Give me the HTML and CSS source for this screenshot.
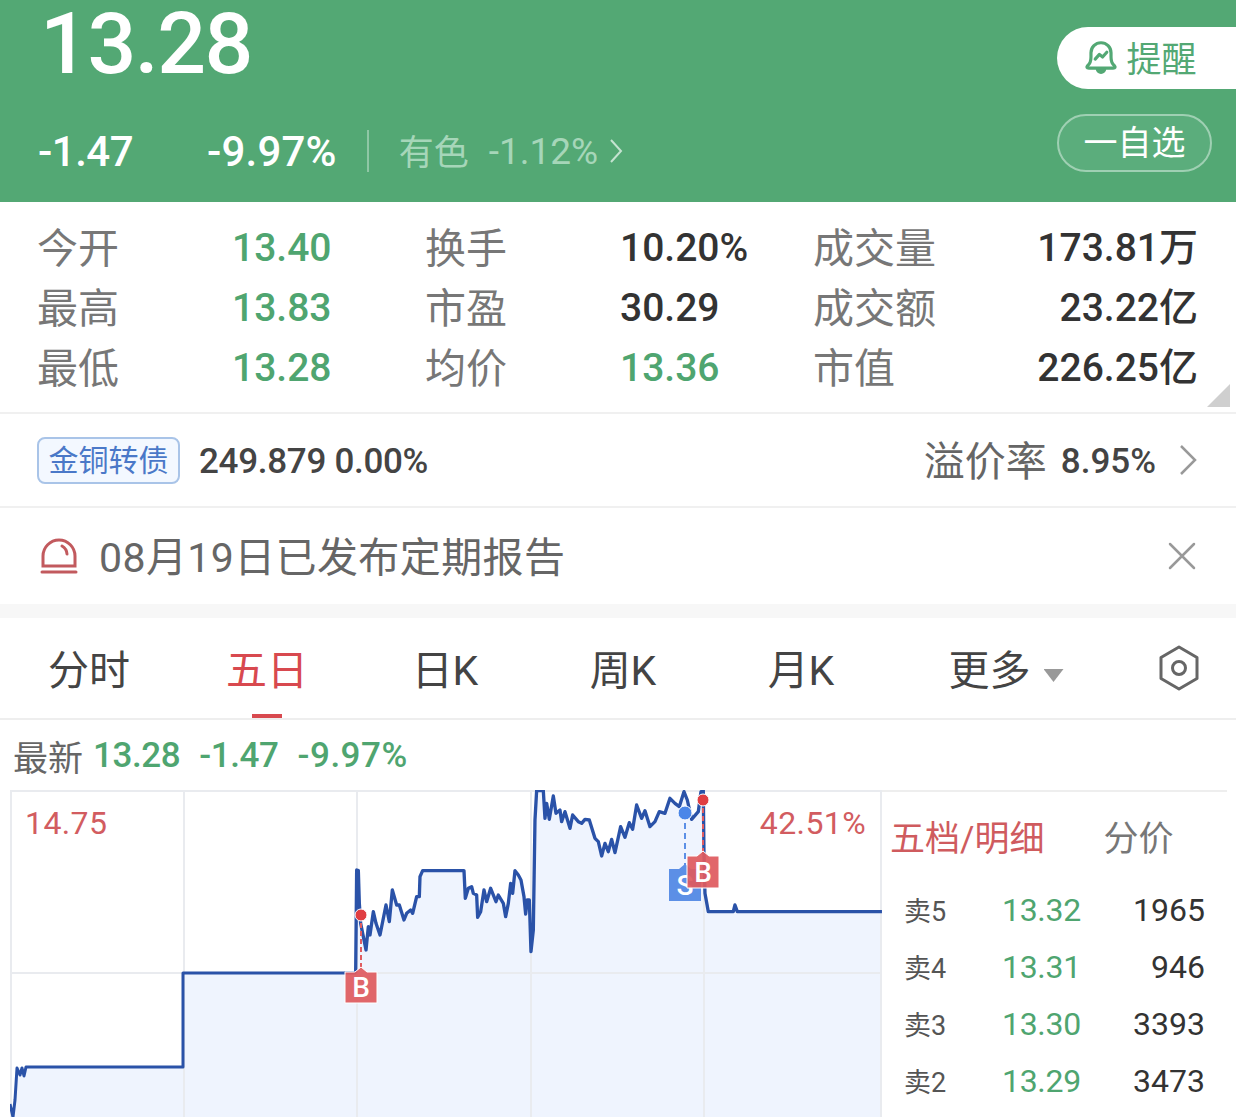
FILE: index.html
```html
<!DOCTYPE html>
<html lang="zh-CN">
<head>
    <meta charset="UTF-8">
    <meta name="viewport" content="width=device-width, initial-scale=1.0">
    <title>金诚信</title>
    <link rel="stylesheet" href="styles.css">
</head>
<body>
    <header class="quote-head">
        <div class="quote-left">
            <div class="last-price">13.28</div>
            <div class="change-row">
                <span class="change-abs">-1.47</span>
                <span class="change-pct">-9.97%</span>
                <span class="change-sep"></span>
                <span class="sector-name">有色</span>
                <span class="sector-pct">-1.12%</span>
                <svg class="sector-arrow" viewBox="0 0 14 26"><path d="M2 2l10 11L2 24"/></svg>
            </div>
        </div>
        <div class="quote-actions">
            <button class="btn-remind">
                <svg class="bell-icon" viewBox="0 0 32 36">
                    <path d="M3.500 26c2.500-2 3-4 3-8v-4a9.500 9.500 0 0 1 19 0v4c0 4 .5 6 3 8 1.500 1.500 1 2.500-1 2.500H4.500c-2 0-2.500-1-1-2.500z"/>
                    <path class="bell-clapper" d="M11 29h10a5 5 0 0 1-10 0z"/>
                    <path d="M10.500 20l4-4.500 3 2.500 4-4.500"/>
                </svg>
                <span>提醒</span>
            </button>
            <button class="btn-watch">一自选</button>
        </div>
    </header>

    <section class="stats">
        <div class="stat-label">今开</div><div class="stat-val green">13.40</div>
        <div class="stat-label">换手</div><div class="stat-val">10.20%</div>
        <div class="stat-label">成交量</div><div class="stat-val right">173.81万</div>
        <div class="stat-label">最高</div><div class="stat-val green">13.83</div>
        <div class="stat-label">市盈</div><div class="stat-val">30.29</div>
        <div class="stat-label">成交额</div><div class="stat-val right">23.22亿</div>
        <div class="stat-label">最低</div><div class="stat-val green">13.28</div>
        <div class="stat-label">均价</div><div class="stat-val green">13.36</div>
        <div class="stat-label">市值</div><div class="stat-val right">226.25亿</div>
        <span class="stats-corner"></span>
    </section>

    <section class="bond-row">
        <span class="bond-tag">金铜转债</span>
        <span class="bond-nums">249.879 0.00%</span>
        <span class="bond-premium">溢价率</span>
        <span class="bond-rate">8.95%</span>
        <svg class="bond-arrow" viewBox="0 0 18 32"><path d="M2 2l14 14L2 30"/></svg>
    </section>

    <section class="notice-row">
        <svg class="notice-icon" viewBox="0 0 38 38">
            <path d="M3 29V19a16 16 0 0 1 32 0v10z"/>
            <path d="M22 9a10 10 0 0 1 5 8"/>
            <path d="M2 35h34"/>
        </svg>
        <span class="notice-text">08月19日已发布定期报告</span>
        <svg class="notice-close" viewBox="0 0 28 28"><path d="M2 2l24 24M26 2L2 26"/></svg>
    </section>

    <div class="band"></div>

    <nav class="tabs">
        <span class="tab">分时</span>
        <span class="tab active">五日</span>
        <span class="tab">日K</span>
        <span class="tab">周K</span>
        <span class="tab">月K</span>
        <span class="tab tab-more">更多<i class="more-caret"></i></span>
        <svg class="hex-icon" viewBox="0 0 44 48">
            <path d="M22 3l18 10.500v21L22 45 4 34.500v-21z"/>
            <circle cx="22" cy="24" r="6.500"/>
        </svg>
    </nav>

    <div class="latest-row">
        <span class="latest-label">最新</span>
        <span>13.28</span>
        <span>-1.47</span>
        <span>-9.97%</span>
    </div>

    <section class="chart-wrap">
        <svg class="chart" viewBox="10 790 872 327">
            <!-- fill under the line -->
            <path class="area" d="M14 1117L17 1067H183V973H356V1117z"/>
            <g transform="translate(340 780) scale(.3333)">
                <polygon class="area" points="47,1011 47,580 50,270 55,272 58,370 62,430 70,470 78,510 85,440 90,465 100,395 108,430 120,465 138,375 148,425 157,330 170,375 178,375 192,420 200,400 212,390 218,400 230,350 238,350 240,290 248,272 372,272 376,355 385,325 395,320 400,340 410,345 413,412 422,395 432,330 440,365 452,325 468,365 475,345 490,370 497,410 505,370 512,310 518,340 525,272 535,285 543,300 552,350 557,402 562,360 568,360 573,515 580,450 585,120 590,32 610,32 615,115 620,70 628,118 640,48 648,100 660,90 665,125 675,95 690,145 698,105 715,125 725,130 735,118 748,120 765,175 775,185 785,228 795,190 805,215 815,178 825,218 842,140 855,172 868,128 878,148 890,75 905,115 915,92 930,140 945,125 958,95 975,100 990,55 1005,70 1018,80 1032,35 1042,60 1055,118 1075,95 1083,35 1090,32 1092,220 1095,340 1105,395 1180,395 1185,375 1192,395 1626,395 1626,1011"/>
            </g>
            <!-- grid -->
            <path class="grid" d="M11 790V1117M184 790V1117M357 790V1117M531 790V1117M704 790V1117M881 790V1117M10 973H881M10 791H881"/>
            <!-- price line -->
            <polyline class="line" points="10,1104 13,1117 15,1100 17,1068 20,1075 22,1068 24,1076 26,1067 183,1067 183,973 356,973"/>
            <g transform="translate(340 780) scale(.3333)">
                <polyline class="line-fine" points="47,580 50,270 55,272 58,370 62,430 70,470 78,510 85,440 90,465 100,395 108,430 120,465 138,375 148,425 157,330 170,375 178,375 192,420 200,400 212,390 218,400 230,350 238,350 240,290 248,272 372,272 376,355 385,325 395,320 400,340 410,345 413,412 422,395 432,330 440,365 452,325 468,365 475,345 490,370 497,410 505,370 512,310 518,340 525,272 535,285 543,300 552,350 557,402 562,360 568,360 573,515 580,450 585,120 590,32 610,32 615,115 620,70 628,118 640,48 648,100 660,90 665,125 675,95 690,145 698,105 715,125 725,130 735,118 748,120 765,175 775,185 785,228 795,190 805,215 815,178 825,218 842,140 855,172 868,128 878,148 890,75 905,115 915,92 930,140 945,125 958,95 975,100 990,55 1005,70 1018,80 1032,35 1042,60 1055,118 1075,95 1083,35 1090,32 1092,220 1095,340 1105,395 1180,395 1185,375 1192,395 1626,395"/>
            </g>
            <!-- trade markers -->
            <path class="dash-red" d="M361 915V970"/>
            <circle class="dot-red" cx="361" cy="915" r="6"/>
            <path class="mark-red" d="M345 972h10l6-5 6 5h10v31h-32z"/>
            <text class="mark-text" x="361" y="997">B</text>

            <path class="dash-blue" d="M685 813V868"/>
            <circle class="dot-blue" cx="685" cy="813" r="7"/>
            <path class="mark-blue" d="M669 869h10l6-5 6 5h10v32h-32z"/>
            <text class="mark-text" x="685" y="895">S</text>

            <path class="dash-red" d="M703 800V856"/>
            <circle class="dot-red" cx="703" cy="800" r="6"/>
            <path class="mark-red" d="M687 856h10l6-5 6 5h10v32h-32z"/>
            <text class="mark-text" x="703" y="882">B</text>

            <text class="axis-text" x="25" y="834">14.75</text>
            <text class="axis-text axis-right" x="866" y="834">42.51%</text>
        </svg>

        <aside class="depth">
            <div class="depth-tabs">
                <span class="depth-tab active">五档/明细</span>
                <span class="depth-tab">分价</span>
            </div>
            <div class="depth-row"><span class="depth-name">卖5</span><span class="depth-price">13.32</span><span class="depth-vol">1965</span></div>
            <div class="depth-row"><span class="depth-name">卖4</span><span class="depth-price">13.31</span><span class="depth-vol">946</span></div>
            <div class="depth-row"><span class="depth-name">卖3</span><span class="depth-price">13.30</span><span class="depth-vol">3393</span></div>
            <div class="depth-row"><span class="depth-name">卖2</span><span class="depth-price">13.29</span><span class="depth-vol">3473</span></div>
        </aside>
    </section>
</body>
</html>
```

FILE: styles.css
```css
html, body {
    margin: 0;
    height: 1117px;
    overflow: hidden;
    background: #fff;
}

body {
    font-family: Roboto, "Noto Sans CJK SC", sans-serif;
    color: #333;
}

.green {
    color: #4fa570;
}

/* Head */
.quote-head {
    height: 202px;
    background: #53a874;
    display: flex;
    justify-content: space-between;
    color: #fff;
}

.quote-left {
    padding-left: 38px;
}

.last-price {
    font-size: 86px;
    font-weight: 500;
    line-height: 84px;
    margin-left: 2px;
    padding-top: 2px;
    letter-spacing: -1.5px;
}

.change-row {
    display: flex;
    align-items: center;
    margin-top: 43px;
    height: 44px;
    font-size: 42px;
    font-weight: 500;
}

.change-abs {
    width: 169px;
    letter-spacing: -.5px;
}

.change-pct {
    letter-spacing: .2px;
}

.change-sep {
    width: 2px;
    height: 42px;
    margin: 0 30px 0 30px;
    background: #8fc7a5;
}

.sector-name {
    font-size: 35px;
    font-weight: 400;
    color: #a6d6b9;
    margin: 0 20px 4px 0;
}

.sector-pct {
    font-size: 37px;
    font-weight: 400;
    color: #a6d6b9;
    margin-right: 11px;
}

.sector-arrow {
    width: 14px;
    height: 26px;
    fill: none;
    stroke: #c4e3d0;
    stroke-width: 2;
}

.quote-actions {
    width: 179px;
    padding-top: 27px;
}

button {
    display: flex;
    align-items: center;
    justify-content: center;
    font-family: inherit;
    padding: 0;
}

.btn-remind {
    width: 179px;
    height: 62px;
    border: none;
    border-radius: 31px 0 0 31px;
    background: #fff;
    color: #53a874;
    font-size: 35px;
    gap: 8px;
    padding: 0 12px 3px 0;
}

.bell-icon {
    width: 34px;
    height: 38px;
    fill: none;
    stroke: #53a874;
    stroke-width: 3;
    stroke-linejoin: round;
    stroke-linecap: round;
}

.bell-clapper {
    fill: #53a874;
    stroke: none;
}

.btn-watch {
    width: 155px;
    height: 58px;
    margin-top: 25px;
    border: 2px solid #9fd0b3;
    border-radius: 29px;
    background: #5bad7c;
    color: #fff;
    font-size: 34px;
    box-sizing: border-box;
    padding-bottom: 5px;
}

/* Stats */
.stats {
    position: relative;
    height: 212px;
    box-sizing: border-box;
    padding: 16px 38px 0;
    display: grid;
    grid-template-columns: 194px 194px 194px 194px 170px 214px;
    grid-auto-rows: 60px;
    align-items: center;
    border-bottom: 2px solid #f0f0f0;
}

.stat-label {
    font-size: 41px;
    color: #777;
    margin: 0 0 6px -1px;
}

.stat-val {
    font-size: 39px;
    font-weight: 500;
    line-height: 60px;
    color: #333;
}

.stat-val.green {
    color: #4fa570;
}

.stat-val.right {
    text-align: right;
    white-space: nowrap;
}

.stats-corner {
    position: absolute;
    right: 6px;
    bottom: 5px;
    width: 23px;
    height: 23px;
    background: #cfcfcf;
    clip-path: polygon(100% 0, 100% 100%, 0 100%);
}

/* Convertible bond */
.bond-row {
    height: 94px;
    box-sizing: border-box;
    padding: 0 39px 0 37px;
    display: flex;
    align-items: center;
    border-bottom: 2px solid #f0f0f0;
}

.bond-tag {
    width: 143px;
    height: 47px;
    box-sizing: border-box;
    border: 2px solid #a9c4e8;
    border-radius: 8px;
    background: #f3f8ff;
    color: #4a78c8;
    font-size: 30px;
    line-height: 43px;
    text-align: center;
}

.bond-nums {
    margin-left: 19px;
    font-size: 35px;
    font-weight: 500;
    letter-spacing: -.3px;
    padding-top: 2px;
    color: #444;
}

.bond-premium {
    margin-left: auto;
    font-size: 41px;
    padding-bottom: 4px;
    color: #666;
}

.bond-rate {
    margin-left: 14px;
    font-size: 35px;
    font-weight: 500;
    padding-top: 2px;
    color: #444;
}

.bond-arrow {
    width: 18px;
    height: 32px;
    margin-left: 23px;
    fill: none;
    stroke: #999;
    stroke-width: 2.500;
}

/* Notice */
.notice-row {
    height: 96px;
    box-sizing: border-box;
    padding: 0 40px;
    display: flex;
    align-items: center;
}

.notice-icon {
    width: 38px;
    height: 38px;
    fill: none;
    stroke: #c25a5e;
    stroke-width: 3;
    stroke-linecap: round;
}

.notice-text {
    margin-left: 21px;
    font-size: 41px;
    letter-spacing: .4px;
    padding-bottom: 4px;
    color: #666;
}

.notice-close {
    width: 28px;
    height: 28px;
    margin-left: auto;
    fill: none;
    stroke: #999;
    stroke-width: 2.500;
    stroke-linecap: round;
}

.band {
    height: 14px;
    background: #f7f7f7;
}

/* Tabs */
.tabs {
    height: 102px;
    box-sizing: border-box;
    display: flex;
    align-items: center;
    border-bottom: 2px solid #eee;
}

.tab {
    position: relative;
    flex: 0 0 178px;
    text-align: center;
    font-size: 41px;
    line-height: 94px;
    padding-top: 6px;
    color: #444;
}

.tab.active {
    color: #d8494f;
}

.tab.active::after {
    content: "";
    position: absolute;
    left: 74px;
    bottom: 0;
    width: 30px;
    height: 4px;
    background: #d8494f;
}

.tab-more {
    flex-basis: 232px;
}

.more-caret {
    display: inline-block;
    width: 20px;
    height: 13px;
    margin-left: 13px;
    background: #999;
    clip-path: polygon(0 0, 100% 0, 50% 100%);
    vertical-align: 3px;
}

.hex-icon {
    width: 44px;
    height: 48px;
    margin-left: 35px;
    fill: none;
    stroke: #666;
    stroke-width: 3;
    stroke-linejoin: round;
}

/* Latest */
.latest-row {
    height: 70px;
    box-sizing: border-box;
    padding: 0 0 0 13px;
    display: flex;
    align-items: center;
    gap: 19px;
    font-size: 35px;
    font-weight: 500;
    letter-spacing: -.4px;
    color: #4fa570;
}

.latest-row span:last-child {
    letter-spacing: .5px;
}

.latest-label {
    font-weight: 400;
    letter-spacing: 0;
    color: #666;
    margin-right: -9px;
}

/* Chart */
.chart-wrap {
    display: flex;
    height: 327px;
    padding-left: 10px;
}

.chart {
    flex: 0 0 872px;
    width: 872px;
    height: 327px;
}

.area {
    fill: #eff4fe;
}

.grid {
    fill: none;
    stroke: #e9ebef;
    stroke-width: 2;
}

.line {
    fill: none;
    stroke: #2a52a8;
    stroke-width: 3;
    stroke-linejoin: round;
}

.line-fine {
    fill: none;
    stroke: #2a52a8;
    stroke-width: 10;
    stroke-linejoin: round;
}

.dash-red {
    fill: none;
    stroke: #e05c60;
    stroke-width: 2;
    stroke-dasharray: 5 3;
}

.dash-blue {
    fill: none;
    stroke: #5c8fe6;
    stroke-width: 2;
    stroke-dasharray: 6 4;
}

.dot-red {
    fill: #e03e42;
    stroke: #fff;
    stroke-width: 1;
}

.dot-blue {
    fill: #4b86e8;
    stroke: #fff;
    stroke-width: 1;
}

.mark-red {
    fill: #df5a5f;
    fill-opacity: .93;
    stroke: #fff;
    stroke-width: 1;
}

.mark-blue {
    fill: #5c8fe6;
}

.mark-text {
    font-size: 28px;
    font-weight: 500;
    fill: #fff;
    text-anchor: middle;
}

.axis-text {
    font-size: 32px;
    letter-spacing: .4px;
    fill: #d25c60;
}

.axis-right {
    text-anchor: end;
}

/* Depth panel */
.depth {
    flex: 0 0 345px;
    box-sizing: border-box;
    padding-left: 8px;
    border-top: 2px solid #eeeeee;
    margin-right: 9px;
}

.depth-tabs {
    display: flex;
    height: 90px;
    box-sizing: border-box;
    align-items: center;
    font-size: 35px;
    color: #777;
    gap: 59px;
    padding-bottom: 4px;
}

.depth-tab.active {
    color: #cf5b5e;
}

.depth-row {
    display: flex;
    align-items: center;
    height: 57px;
    padding-left: 14px;
    width: 315px;
    box-sizing: border-box;
}

.depth-name {
    width: 98px;
    font-size: 27px;
    padding-bottom: 3px;
    color: #555;
}

.depth-price {
    font-size: 32px;
    letter-spacing: -.3px;
    padding-bottom: 1px;
    color: #4fa570;
}

.depth-vol {
    margin-left: auto;
    font-size: 32px;
    padding-bottom: 1px;
    color: #333;
}
```
